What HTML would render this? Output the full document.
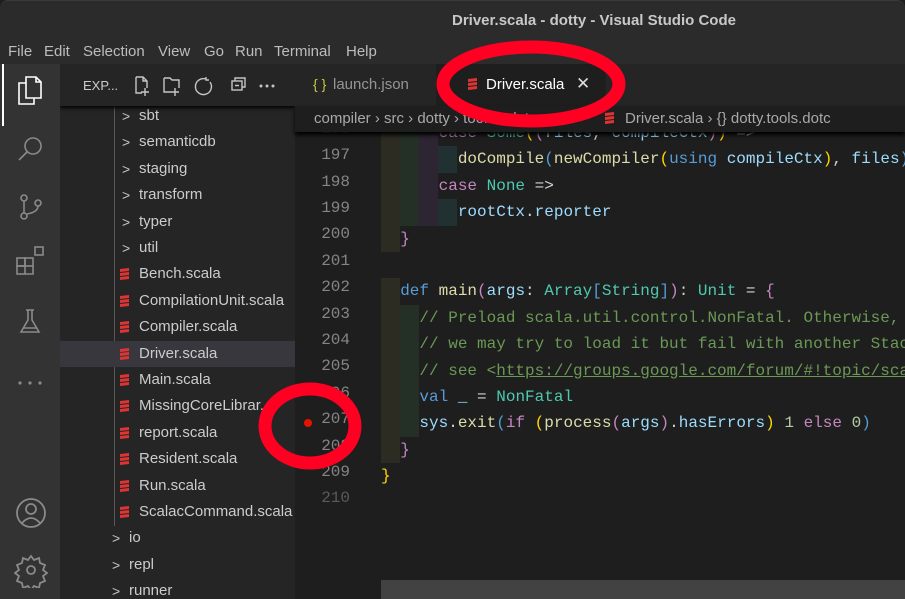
<!DOCTYPE html>
<html style="width:905px;height:599px;overflow:hidden"><head><meta charset="utf-8"><style>
*{margin:0;padding:0;box-sizing:border-box}
body{width:905px;height:599px;overflow:hidden;background:#1e1e1e;font-family:"Liberation Sans",sans-serif;position:relative}
.abs{position:absolute}
#title{left:0;top:0;width:905px;height:38px;background:#2b2b2b;border-radius:8px 8px 0 0;border-top:1px solid #3a3a3a}
#title span{position:absolute;left:452px;top:11px;color:#c8c8c8;font-weight:bold;font-size:15px}
#menu{left:0;top:38px;width:905px;height:26px;background:#2b2b2b;color:#bdbdbd;font-size:15px}
#menu span{position:absolute;top:5px}
#act{left:0;top:64px;width:60px;height:535px;background:#333333;overflow:hidden}
#side{left:60px;top:64px;width:235px;height:535px;background:#252526;overflow:hidden}
.row{position:absolute;left:0;width:235px;height:26.4px;color:#cccccc;font-size:15px;line-height:26px}
.chev{position:absolute;color:#c5c5c5;font-size:14px}
.sc{position:absolute;width:9px;height:13px;top:7px}
#tabs{left:295px;top:64px;width:610px;height:42px;background:#252526}
#bc{left:295px;top:106px;width:610px;height:26px;background:#1e1e1e;color:#a9a9a9;font-size:15px;box-shadow:0 3px 4px #000;z-index:2}
.ln{position:absolute;width:60px;text-align:right;color:#858585;font-family:"Liberation Mono",monospace;font-size:16px}
.code{position:absolute;left:381px;font-family:"Liberation Mono",monospace;font-size:16px;color:#d4d4d4;white-space:pre;height:26.4px;line-height:26.4px}
.g{position:absolute;height:26.4px;width:19.2px}
.k{color:#569cd6}.f{color:#dcdcaa}.t{color:#4ec9b0}.c{color:#6a9955}.p{color:#c586c0}.y{color:#ffd700}.v{color:#9cdcfe}.n{color:#b5cea8}
</style></head><body>
<div id="title" class="abs"><span>Driver.scala - dotty - Visual Studio Code</span></div>
<div id="menu" class="abs">
<span style="left:8px">File</span><span style="left:44px">Edit</span><span style="left:83px">Selection</span><span style="left:158px">View</span><span style="left:204px">Go</span><span style="left:235px">Run</span><span style="left:274px">Terminal</span><span style="left:346px">Help</span>
</div>
<div id="act" class="abs">
<div class="abs" style="left:2px;top:0;width:2px;height:62px;background:#fff"></div>
<svg class="abs" style="left:14px;top:8px" width="32" height="320" fill="none" stroke-width="1.6">
<g stroke="#fff"><path d="M12 5h10l5 5v16H12z M22 5v5h5"/><path d="M12 11H5v21h15v-6"/></g>
<g stroke="#8a8a8a"><circle cx="19" cy="74" r="8"/><path d="M13 80l-8 8"/>
<circle cx="10" cy="126" r="3"/><circle cx="10" cy="144" r="3"/><circle cx="24" cy="131" r="3"/><path d="M10 129v12M24 134q0 6-11 8"/>
<rect x="3" y="186" width="8" height="8"/><rect x="11" y="186" width="8" height="8"/><rect x="3" y="194" width="8" height="8"/><rect x="21" y="175" width="8" height="8"/><path d="M11 202h8v-8"/>
<path d="M12 238h8M14 238v10l-7 12h18l-7-12v-10M9 256h14"/></g>
<g fill="#8a8a8a"><circle cx="6" cy="311" r="1.6"/><circle cx="16" cy="311" r="1.6"/><circle cx="26" cy="311" r="1.6"/></g>
</svg>
<svg class="abs" style="left:14px;top:432px" width="34" height="92" fill="none" stroke="#8a8a8a" stroke-width="1.8">
<circle cx="17" cy="17" r="14"/><circle cx="17" cy="13" r="5"/><path d="M8 27q9-10 18 0"/>
<circle cx="17" cy="74" r="4"/><path d="M17 60l3 4 5-2 1 5 5 2-2 5 4 3-4 3 2 5-5 2-1 5-5-2-3 4-3-4-5 2-1-5-5-2 2-5-4-3 4-3-2-5 5-2 1-5 5 2z"/>
</svg>
</div>
<div id="side" class="abs">
<div class="abs" style="left:0;top:0;width:235px;height:42px;background:#252526;box-shadow:0 2px 4px #000;z-index:1"></div>
<span class="abs" style="left:23px;top:14px;color:#cccccc;font-size:13px;z-index:2">EXP...</span>
<svg class="abs" style="left:73px;top:9px;z-index:2" width="150" height="24" fill="none" stroke="#c5c5c5" stroke-width="1.4">
<path d="M3 4h7l4 4v7M3 4v16h6M10 4v4h4M12 15v8M8 19h8"/>
<path d="M31 5h6l2 2h7v8M31 5v14h7M42 15v8M38 19h8"/>
<path d="M73 6a8 8 0 1 0 4 3M73 4v3h3"/>
<rect x="99" y="8" width="10" height="9"/><path d="M102 8V5h10v9h-3M102 12.5h4"/>
<circle cx="128" cy="13" r=".8" fill="#c5c5c5"/><circle cx="134" cy="13" r=".8" fill="#c5c5c5"/><circle cx="140" cy="13" r=".8" fill="#c5c5c5"/>
</svg>
<div class="abs" style="left:54px;top:42px;width:1px;height:420px;background:#585858"></div>
<div class="row" style="top:39px;"><span class="chev" style="left:62px">&gt;</span><span style="position:absolute;left:79px">sbt</span></div>
<div class="row" style="top:65.4px;"><span class="chev" style="left:62px">&gt;</span><span style="position:absolute;left:79px">semanticdb</span></div>
<div class="row" style="top:91.8px;"><span class="chev" style="left:62px">&gt;</span><span style="position:absolute;left:79px">staging</span></div>
<div class="row" style="top:118.2px;"><span class="chev" style="left:62px">&gt;</span><span style="position:absolute;left:79px">transform</span></div>
<div class="row" style="top:144.6px;"><span class="chev" style="left:62px">&gt;</span><span style="position:absolute;left:79px">typer</span></div>
<div class="row" style="top:171px;"><span class="chev" style="left:62px">&gt;</span><span style="position:absolute;left:79px">util</span></div>
<div class="row" style="top:197.4px;"><svg class="sc" style="left:60px"><path d="M0 1l9-1v3L0 4zM0 5l9-1v3L0 8zM0 9l9-1v3L0 12z" fill="#dd3434"/></svg><span style="position:absolute;left:79px">Bench.scala</span></div>
<div class="row" style="top:223.8px;"><svg class="sc" style="left:60px"><path d="M0 1l9-1v3L0 4zM0 5l9-1v3L0 8zM0 9l9-1v3L0 12z" fill="#dd3434"/></svg><span style="position:absolute;left:79px">CompilationUnit.scala</span></div>
<div class="row" style="top:250.2px;"><svg class="sc" style="left:60px"><path d="M0 1l9-1v3L0 4zM0 5l9-1v3L0 8zM0 9l9-1v3L0 12z" fill="#dd3434"/></svg><span style="position:absolute;left:79px">Compiler.scala</span></div>
<div class="row" style="top:276.6px;background:#37373d"><svg class="sc" style="left:60px"><path d="M0 1l9-1v3L0 4zM0 5l9-1v3L0 8zM0 9l9-1v3L0 12z" fill="#dd3434"/></svg><span style="position:absolute;left:79px">Driver.scala</span></div>
<div class="row" style="top:303px;"><svg class="sc" style="left:60px"><path d="M0 1l9-1v3L0 4zM0 5l9-1v3L0 8zM0 9l9-1v3L0 12z" fill="#dd3434"/></svg><span style="position:absolute;left:79px">Main.scala</span></div>
<div class="row" style="top:329.4px;"><svg class="sc" style="left:60px"><path d="M0 1l9-1v3L0 4zM0 5l9-1v3L0 8zM0 9l9-1v3L0 12z" fill="#dd3434"/></svg><span style="position:absolute;left:79px">MissingCoreLibrar...</span></div>
<div class="row" style="top:355.8px;"><svg class="sc" style="left:60px"><path d="M0 1l9-1v3L0 4zM0 5l9-1v3L0 8zM0 9l9-1v3L0 12z" fill="#dd3434"/></svg><span style="position:absolute;left:79px">report.scala</span></div>
<div class="row" style="top:382.2px;"><svg class="sc" style="left:60px"><path d="M0 1l9-1v3L0 4zM0 5l9-1v3L0 8zM0 9l9-1v3L0 12z" fill="#dd3434"/></svg><span style="position:absolute;left:79px">Resident.scala</span></div>
<div class="row" style="top:408.6px;"><svg class="sc" style="left:60px"><path d="M0 1l9-1v3L0 4zM0 5l9-1v3L0 8zM0 9l9-1v3L0 12z" fill="#dd3434"/></svg><span style="position:absolute;left:79px">Run.scala</span></div>
<div class="row" style="top:435px;"><svg class="sc" style="left:60px"><path d="M0 1l9-1v3L0 4zM0 5l9-1v3L0 8zM0 9l9-1v3L0 12z" fill="#dd3434"/></svg><span style="position:absolute;left:79px">ScalacCommand.scala</span></div>
<div class="row" style="top:461.4px;"><span class="chev" style="left:52px">&gt;</span><span style="position:absolute;left:69px">io</span></div>
<div class="row" style="top:487.8px;"><span class="chev" style="left:52px">&gt;</span><span style="position:absolute;left:69px">repl</span></div>
<div class="row" style="top:514.2px;"><span class="chev" style="left:52px">&gt;</span><span style="position:absolute;left:69px">runner</span></div>
</div>
<div id="tabs" class="abs">
<span class="abs" style="left:18px;top:12px;color:#cbcb41;font-size:14px">{ }</span>
<span class="abs" style="left:38px;top:12px;color:#969696;font-size:15px">launch.json</span>
<div class="abs" style="left:141px;top:0;width:170px;height:42px;background:#1e1e1e">
<svg class="abs" style="left:32px;top:14px" width="9" height="13"><path d="M0 1l9-1v3L0 4zM0 5l9-1v3L0 8zM0 9l9-1v3L0 12z" fill="#dd3434"/></svg>
<span class="abs" style="left:50px;top:12px;color:#fff;font-size:15px">Driver.scala</span>
<span class="abs" style="left:140px;top:10px;color:#ddd;font-size:17px">✕</span>
</div>
</div>
<div id="bc" class="abs"><span class="abs" style="left:19px;top:4px;white-space:pre">compiler › src › dotty › tools › dotc ›  </span>
<svg class="abs" style="left:310px;top:6px" width="9" height="13"><path d="M0 1l9-1v3L0 4zM0 5l9-1v3L0 8zM0 9l9-1v3L0 12z" fill="#dd3434"/></svg>
<span class="abs" style="left:330px;top:4px;white-space:pre">Driver.scala › {} dotty.tools.dotc</span></div>

<div class="abs" style="left:295px;top:120px;width:610px;height:479px;overflow:hidden">
<div class="g" style="left:86px;top:0;height:132px;background:#2c2c22"></div>
<div class="g" style="left:105px;top:0;height:105.6px;background:#243026"></div>
<div class="g" style="left:124px;top:0;height:105.6px;background:#2d2532"></div>
<div class="g" style="left:143px;top:26.4px;background:#213030"></div>
<div class="g" style="left:143px;top:79.2px;background:#213030"></div>
<div class="g" style="left:86px;top:158.4px;height:184.8px;background:#2c2c22"></div>
<div class="g" style="left:105px;top:184.8px;height:132px;background:#243026"></div>
</div>
<div class="ln" style="top:120px;left:290px">196</div>
<div class="ln" style="top:146px;left:290px">197</div>
<div class="ln" style="top:172.6px;left:290px">198</div>
<div class="ln" style="top:199px;left:290px">199</div>
<div class="ln" style="top:225.4px;left:290px">200</div>
<div class="ln" style="top:251.8px;left:290px">201</div>
<div class="ln" style="top:278.2px;left:290px">202</div>
<div class="ln" style="top:304.6px;left:290px">203</div>
<div class="ln" style="top:331px;left:290px">204</div>
<div class="ln" style="top:357.4px;left:290px">205</div>
<div class="ln" style="top:383.8px;left:290px">206</div>
<div class="ln" style="top:410.2px;left:290px">207</div>
<div class="ln" style="top:436.6px;left:290px">208</div>
<div class="ln" style="top:463px;left:290px">209</div>
<div class="ln" style="top:489.4px;left:290px;color:#5a5a5a">210</div>
<div class="abs" style="left:304px;top:419px;width:8px;height:8px;border-radius:50%;background:#e51400"></div>

<div class="code" style="top:120px">      <span class="p">case</span> <span class="t">Some</span><span class="y">(</span><span class="p">(</span><span class="v">files</span>, <span class="v">compileCtx</span><span class="p">)</span><span class="y">)</span> =&gt;</div>
<div class="code" style="top:146.4px">        <span class="f">doCompile</span><span class="k">(</span><span class="f">newCompiler</span><span class="y">(</span><span class="k">using</span> <span class="v">compileCtx</span><span class="y">)</span>, <span class="v">files</span><span class="k">)</span></div>
<div class="code" style="top:172.8px">      <span class="p">case</span> <span class="t">None</span> =&gt;</div>
<div class="code" style="top:199.2px">        <span class="v">rootCtx</span>.<span class="v">reporter</span></div>
<div class="code" style="top:225.6px">  <span class="p">}</span></div>
<div class="code" style="top:278.4px">  <span class="k">def</span> <span class="f">main</span><span class="p">(</span><span class="v">args</span>: <span class="t">Array</span><span class="k">[</span><span class="t">String</span><span class="k">]</span><span class="p">)</span>: <span class="t">Unit</span> = <span class="p">{</span></div>
<div class="code c" style="top:304.8px">    // Preload scala.util.control.NonFatal. Otherwise,</div>
<div class="code c" style="top:331.2px">    // we may try to load it but fail with another Stack</div>
<div class="code c" style="top:357.6px">    // see &lt;<u>https://groups.google.com/forum/#!topic/scala</u></div>
<div class="code" style="top:384px">    <span class="k">val</span> <span class="v">_</span> = <span class="t">NonFatal</span></div>
<div class="code" style="top:410.4px">    <span class="v">sys</span>.<span class="f">exit</span><span class="k">(</span><span class="p">if</span> <span class="y">(</span><span class="f">process</span><span class="p">(</span><span class="v">args</span><span class="p">)</span>.<span class="v">hasErrors</span><span class="y">)</span> <span class="n">1</span> <span class="p">else</span> <span class="n">0</span><span class="k">)</span></div>
<div class="code" style="top:436.8px">  <span class="p">}</span></div>
<div class="code" style="top:463.2px"><span class="y">}</span></div>
<div class="abs" style="left:381px;top:580px;width:524px;height:19px;background:#424242"></div>

<svg class="abs" style="left:0;top:0;z-index:5" width="905" height="599" fill="none" stroke="#ff0022" stroke-width="13">
<ellipse cx="531" cy="84" rx="88" ry="37"/>
<ellipse cx="310" cy="426" rx="45" ry="37"/>
</svg>
</body></html>
